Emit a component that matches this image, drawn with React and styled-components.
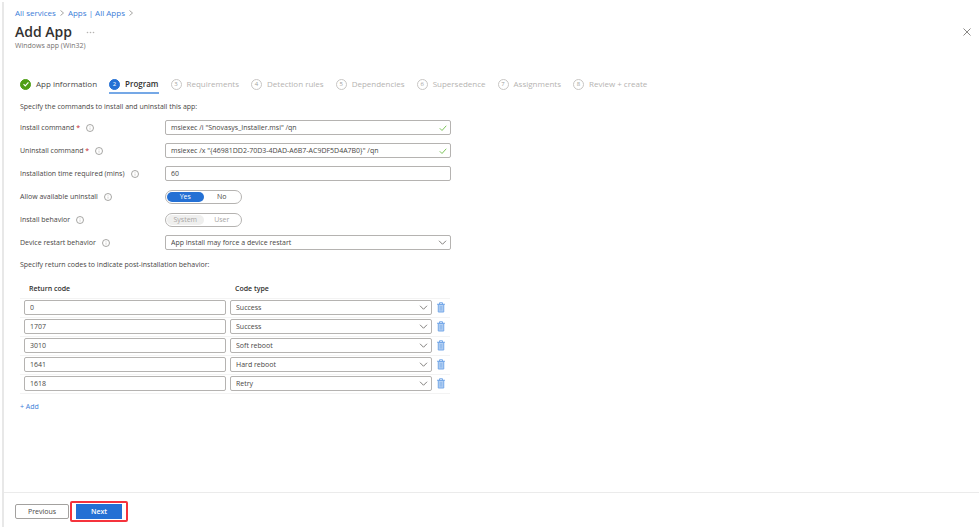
import React, { useState } from 'react';
import styled, { createGlobalStyle, css } from 'styled-components';

const GlobalStyle = createGlobalStyle`
  *, *::before, *::after { box-sizing: border-box; }
  body { margin: 0; background: #fff; }
  body, button, input, select {
    font-family: "Open Sans", "Noto Sans", sans-serif;
    font-size: 7px;
    line-height: 10px;
    color: #484644;
  }
`;

const Blade = styled.main`
  display: flex;
  flex-direction: column;
  min-height: calc(100vh - 4px);
  margin: 2px 0 2px 2px;
  border-left: 2px solid #e8e8e8;
`;

const Body = styled.div`
  flex: 1;
  padding: 6px 8px 20px 11px;
`;

const Breadcrumb = styled.nav`
  display: flex;
  align-items: center;
  gap: 4px;
  height: 10px;
  font-size: 8px;
`;

const Crumb = styled.a`
  color: #3b7dd8;
  text-decoration: none;
`;

const Header = styled.header`
  display: flex;
  justify-content: space-between;
  align-items: flex-start;
  margin-top: 5px;
`;

const TitleRow = styled.div`
  display: flex;
  align-items: center;
  gap: 14px;
`;

const Title = styled.h1`
  margin: 0;
  font-size: 14px;
  line-height: 18px;
  font-weight: 600;
  color: #323130;
`;

const Subtitle = styled.p`
  margin: 0;
  color: #75726f;
`;

const IconButton = styled.button`
  display: inline-flex;
  padding: 0;
  border: 0;
  background: none;
  color: ${(p) => p.$color || '#a5a5a5'};
  cursor: pointer;
`;

const CloseButton = styled(IconButton)`
  margin-top: 5px;
`;

const Steps = styled.nav`
  display: flex;
  flex-wrap: wrap;
  gap: 12px;
  margin: 25px 0 0 5px;
`;

const Step = styled.button`
  display: flex;
  align-items: center;
  gap: 5px;
  height: 18px;
  padding: 0;
  border: 0;
  border-bottom: 2px solid transparent;
  background: none;
  white-space: nowrap;
  font-size: 8px;
  color: ${(p) => (p.$state === 'todo' ? '#b5b3b1' : '#484644')};
  ${(p) => p.$state === 'current' && css`
    border-color: #75a8e6;
    font-weight: 600;
    color: #323130;
  `}
`;

const StepMark = styled.span`
  display: grid;
  place-items: center;
  width: 11px;
  height: 11px;
  border: 1px solid #c8c6c4;
  border-radius: 50%;
  font-size: 6px;
  line-height: 9px;
  font-weight: 400;
  color: #a19f9d;
  ${(p) => p.$state === 'done' && css`
    border-color: #4e9f14;
    background: #4e9f14;
    color: #fff;
  `}
  ${(p) => p.$state === 'current' && css`
    border-color: #2470d4;
    background: #2470d4;
    color: #fff;
  `}
`;

const Content = styled.div`
  padding-left: 5px;
`;

const Note = styled.p`
  margin: ${(p) => (p.$spaced ? '10px' : '8px')} 0 8px;
`;

const Form = styled.div`
  display: grid;
  grid-template-columns: 145px minmax(0, 286px);
  grid-auto-rows: 15px;
  row-gap: 8px;
  align-items: center;
`;

const LabelCell = styled.div`
  display: flex;
  align-items: center;
  gap: 6px;
  white-space: nowrap;
`;

const Required = styled.span`
  color: #c4262e;
`;

const Field = styled.div`
  display: grid;
  align-items: center;
  > * { grid-area: 1 / 1; }
  > svg { justify-self: end; margin-right: 4px; pointer-events: none; }
`;

const control = css`
  display: block;
  width: 100%;
  height: 15px;
  padding: 0 5px;
  border: 1px solid #b5b3b1;
  border-radius: 2px;
  background: #fff;
  line-height: 13px;
  outline: 0;
`;

const TextBox = styled.input`
  ${control}
`;

const Dropdown = styled.select`
  ${control}
  appearance: none;
`;

const Toggle = styled.div`
  display: grid;
  grid-template-columns: 1fr 1fr;
  width: 77px;
  height: 14px;
  padding: 1px;
  border: 1px solid #b5b3b1;
  border-radius: 7px;
`;

const ToggleOption = styled.label`
  display: grid;
  place-items: center;
  border-radius: 5px;
  color: ${(p) => (p.$disabled ? '#a8a6a4' : '#484644')};
  > * { grid-area: 1 / 1; }
  &:has(input:checked) {
    background: ${(p) => (p.$disabled ? '#efefee' : '#2470d4')};
    color: ${(p) => (p.$disabled ? '#a8a6a4' : '#fff')};
  }
`;

const HiddenRadio = styled.input`
  appearance: none;
  width: 100%;
  height: 100%;
  margin: 0;
`;

const CodeTable = styled.table`
  width: 100%;
  max-width: 430px;
  margin-top: 14px;
  border-collapse: collapse;
  table-layout: fixed;
`;

const HeadCell = styled.th`
  width: ${(p) => p.$width || 'auto'};
  height: 14px;
  padding: 0 0 0 9px;
  text-align: left;
  vertical-align: top;
  font-weight: 600;
  color: #323130;
`;

const CodeRow = styled.tr`
  height: 19px;
  border-top: 1px solid #f3f3f3;
  border-bottom: 1px solid #f3f3f3;
`;

const Cell = styled.td`
  padding: 1px 0 1px 4px;
`;

const IconCell = styled.td`
  padding: 0 0 0 5px;
  line-height: 0;
`;

const AddLink = styled.button`
  display: block;
  margin-top: 8px;
  padding: 0;
  border: 0;
  background: none;
  color: #3b7dd8;
`;

const Footer = styled.footer`
  display: flex;
  align-items: center;
  gap: 1px;
  padding: 8px 11px 5px;
  border-top: 1px solid #ebebeb;
`;

const NavButton = styled.button`
  height: 15px;
  padding: 0;
  width: ${(p) => (p.$primary ? '46px' : '54px')};
  border: 1px solid ${(p) => (p.$primary ? '#2470d4' : '#a3a19f')};
  border-radius: ${(p) => (p.$primary ? '0' : '2px')};
  background: ${(p) => (p.$primary ? '#2470d4' : '#fff')};
  color: ${(p) => (p.$primary ? '#fff' : '#484644')};
  font-weight: ${(p) => (p.$primary ? '600' : '500')};
`;

const Highlight = styled.div`
  display: flex;
  padding: 1px 4px;
  border: 2px solid #f5333c;
  border-radius: 2px;
`;

const Info = () => (
  <svg width="8" height="8" viewBox="0 0 16 16" fill="none" stroke="#8a8886" strokeWidth="1.5" aria-hidden="true">
    <circle cx="8" cy="8" r="7" />
    <path d="M8 7v4.5M8 4v1.5" stroke="#c8c6c4" />
  </svg>
);

const Tick = ({ size = 8, color = '#7cc45a', weight = 2 }) => (
  <svg width={size} height={size} viewBox="0 0 16 16" fill="none" stroke={color} strokeWidth={weight} aria-hidden="true">
    <path d="M1.500 8.500 L6 13 L14.500 3.500" />
  </svg>
);

const Chevron = () => (
  <svg width="9" height="9" viewBox="0 0 18 18" fill="none" stroke="#75726f" strokeWidth="1.800" aria-hidden="true">
    <path d="M2 5.500 L9 12.500 L16 5.500" />
  </svg>
);

const CrumbArrow = () => (
  <svg width="4" height="6" viewBox="0 0 8 12" fill="none" stroke="#8a8886" strokeWidth="1.500" aria-hidden="true">
    <path d="M1 1 L7 6 L1 11" />
  </svg>
);

const Bin = () => (
  <svg width="8" height="11" viewBox="0 0 16 22" fill="none" stroke="#76a8e8" strokeWidth="2" aria-hidden="true">
    <path d="M2.500 5 H13.500 V20 H2.500 Z" fill="#b4d0f3" />
    <path d="M0 4.500 H16 M5 4 V1.500 H11 V4" />
    <path d="M6.500 8 V17 M9.500 8 V17" strokeWidth="1.200" />
  </svg>
);

const steps = ['App information', 'Program', 'Requirements', 'Detection rules', 'Dependencies', 'Supersedence', 'Assignments', 'Review + create'];

const initialCodes = [
  ['0', 'Success'],
  ['1707', 'Success'],
  ['3010', 'Soft reboot'],
  ['1641', 'Hard reboot'],
  ['1618', 'Retry'],
];

const codeTypes = ['Success', 'Soft reboot', 'Hard reboot', 'Retry', 'Failed'];

function FieldLabel({ id, target, required, children }) {
  return (
    <LabelCell>
      <label id={id} htmlFor={target}>
        {children}
        {required && <Required> *</Required>}
      </label>
      <Info />
    </LabelCell>
  );
}

function Choice({ name, labelledBy, options, disabled }) {
  const [value, setValue] = useState(options[0]);
  return (
    <Toggle role="radiogroup" aria-labelledby={labelledBy}>
      {options.map((option) => (
        <ToggleOption key={option} $disabled={disabled}>
          <HiddenRadio type="radio" name={name} checked={value === option} disabled={disabled} onChange={() => setValue(option)} />
          <span>{option}</span>
        </ToggleOption>
      ))}
    </Toggle>
  );
}

export default function App() {
  const [codes, setCodes] = useState(initialCodes);
  return (
    <>
      <GlobalStyle />
      <Blade>
        <Body>
          <Breadcrumb aria-label="Breadcrumb">
            <Crumb href="#services">All services</Crumb>
            <CrumbArrow />
            <Crumb href="#apps">Apps | All Apps</Crumb>
            <CrumbArrow />
          </Breadcrumb>
          <Header>
            <div>
              <TitleRow>
                <Title>Add App</Title>
                <IconButton aria-label="More">
                  <svg width="9" height="3" viewBox="0 0 9 3" fill="#b5b3b1">
                    <circle cx="1.500" cy="1.500" r="0.800" />
                    <circle cx="4.500" cy="1.500" r="0.800" />
                    <circle cx="7.500" cy="1.500" r="0.800" />
                  </svg>
                </IconButton>
              </TitleRow>
              <Subtitle>Windows app (Win32)</Subtitle>
            </div>
            <CloseButton aria-label="Close" $color="#8a8886">
              <svg width="8" height="8" viewBox="0 0 8 8" stroke="currentColor" fill="none">
                <path d="M0.500 0.500 L7.500 7.500 M7.500 0.500 L0.500 7.500" />
              </svg>
            </CloseButton>
          </Header>

          <Steps aria-label="Steps">
            {steps.map((name, i) => {
              const state = i === 0 ? 'done' : i === 1 ? 'current' : 'todo';
              return (
                <Step key={name} $state={state} aria-current={i === 1 ? 'step' : undefined}>
                  <StepMark $state={state}>{i === 0 ? <Tick size={6} color="#fff" weight={3} /> : i + 1}</StepMark>
                  {name}
                </Step>
              );
            })}
          </Steps>

          <Content>
            <Note>Specify the commands to install and uninstall this app:</Note>
            <Form>
              <FieldLabel target="install" required>Install command</FieldLabel>
              <Field>
                <TextBox id="install" defaultValue={'msiexec /i "Snovasys_Installer.msi" /qn'} />
                <Tick />
              </Field>
              <FieldLabel target="uninstall" required>Uninstall command</FieldLabel>
              <Field>
                <TextBox id="uninstall" defaultValue={'msiexec /x "{46981DD2-70D3-4DAD-A6B7-AC9DF5D4A7B0}" /qn'} />
                <Tick />
              </Field>
              <FieldLabel target="minutes">Installation time required (mins)</FieldLabel>
              <TextBox id="minutes" defaultValue="60" />
              <FieldLabel id="allow-label">Allow available uninstall</FieldLabel>
              <Choice name="allow" labelledBy="allow-label" options={['Yes', 'No']} />
              <FieldLabel id="behavior-label">Install behavior</FieldLabel>
              <Choice name="behavior" labelledBy="behavior-label" options={['System', 'User']} disabled />
              <FieldLabel target="restart">Device restart behavior</FieldLabel>
              <Field>
                <Dropdown id="restart">
                  <option>App install may force a device restart</option>
                  <option>No specific action</option>
                </Dropdown>
                <Chevron />
              </Field>
            </Form>
            <Note $spaced>Specify return codes to indicate post-installation behavior:</Note>

            <CodeTable>
              <thead>
                <tr>
                  <HeadCell>Return code</HeadCell>
                  <HeadCell>Code type</HeadCell>
                  <HeadCell $width="18px" aria-label="Delete" />
                </tr>
              </thead>
              <tbody>
                {codes.map(([code, type], i) => (
                  <CodeRow key={code || i}>
                    <Cell><TextBox aria-label="Return code" defaultValue={code} /></Cell>
                    <Cell>
                      <Field>
                        <Dropdown aria-label="Code type" defaultValue={type}>
                          {codeTypes.map((t) => <option key={t}>{t}</option>)}
                        </Dropdown>
                        <Chevron />
                      </Field>
                    </Cell>
                    <IconCell>
                      <IconButton aria-label={`Delete ${code}`} onClick={() => setCodes(codes.filter((_, n) => n !== i))}>
                        <Bin />
                      </IconButton>
                    </IconCell>
                  </CodeRow>
                ))}
              </tbody>
            </CodeTable>
            <AddLink onClick={() => setCodes([...codes, ['', 'Success']])}>+ Add</AddLink>
          </Content>
        </Body>
        <Footer>
          <NavButton>Previous</NavButton>
          <Highlight>
            <NavButton $primary>Next</NavButton>
          </Highlight>
        </Footer>
      </Blade>
    </>
  );
}
